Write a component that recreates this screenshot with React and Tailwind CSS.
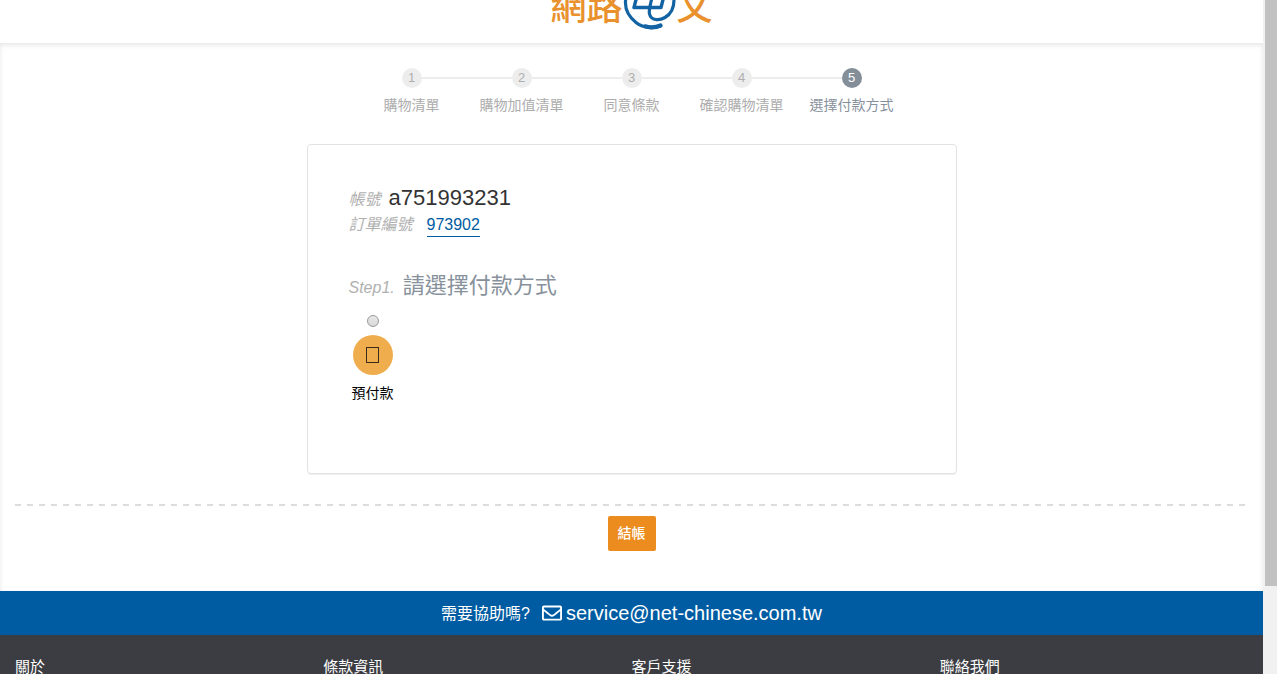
import { FaRegEnvelope } from 'react-icons/fa';

const steps = ['購物清單', '購物加值清單', '同意條款', '確認購物清單', '選擇付款方式'];
const footerColumns = ['關於', '條款資訊', '客戶支援', '聯絡我們'];

function Logo() {
  return (
    <a
      href="#home"
      aria-label="網路中文"
      className="flex items-end font-['Noto_Sans_CJK_TC',sans-serif] text-4xl leading-9 font-medium text-[#e8912d]"
    >
      <span>網路</span>
      <svg viewBox="0 0 54 54" className="-mb-2 h-[54px] w-[54px]" fill="none" stroke="#1263a3" strokeLinecap="round" strokeLinejoin="round">
        <path d="M37.500 49.800C30 53 20 52 13 46.500C5 40 2 32 2.500 25C4 11 14 2 27 2C41 2 51 11 51 24C51 32 48 38 42 41.500C36 45 28 44.500 26.500 38C26 36 26.500 32 27.500 28L32 8" strokeWidth="3.200" />
        <path d="M37.500 49.500C33 51.500 27 51.800 22 50.300" strokeWidth="4.200" />
        <path d="M15.500 14L11 31.500L38 31.500L42.500 14Z" strokeWidth="3.400" />
      </svg>
      <span>文</span>
    </a>
  );
}

function Steps() {
  return (
    <ol className="mx-auto flex w-full max-w-[550px] text-center text-sm leading-5">
      {steps.map((label, index) => {
        const active = index === steps.length - 1;
        return (
          <li key={label} className={active ? 'flex-1 text-[#87919c]' : 'flex-1 text-[#adadad]'}>
            <div className="flex items-center">
              <span className={index === 0 ? 'h-0.5 flex-1' : 'h-0.5 flex-1 bg-[#ededed]'} />
              <span
                className={
                  active
                    ? 'size-5 rounded-full bg-[#848e99] text-[13px] text-white'
                    : 'size-5 rounded-full bg-[#ededed] text-[13px]'
                }
              >
                {index + 1}
              </span>
              <span className={active ? 'h-0.5 flex-1' : 'h-0.5 flex-1 bg-[#ededed]'} />
            </div>
            <div className="mt-[7px] whitespace-nowrap">{label}</div>
          </li>
        );
      })}
    </ol>
  );
}

export default function App() {
  return (
    <div className="flex h-screen overflow-hidden bg-white font-['Liberation_Sans','Noto_Sans_CJK_TC',sans-serif]">
      <div className="flex min-w-0 flex-1 flex-col">
        <header className="flex h-[43px] shrink-0 items-end justify-center pb-[21px]">
          <Logo />
        </header>
        <main className="shrink-0 px-[15px] pt-[25px] pb-10 shadow-[inset_0_2px_5px_#e6e6e6]">
          <Steps />
          <section className="mx-auto mt-[29px] min-h-[330px] max-w-[650px] rounded border border-[#e2e2e2] px-[41px] pt-[39px] pb-16 shadow-[0_1px_1px_#f0f0f0]">
            <p className="flex items-baseline gap-2 leading-7">
              <em className="text-base leading-7 text-[#b0b0b0]">帳號</em>
              <span className="text-[22px] text-[#333333]">a751993231</span>
            </p>
            <p className="flex items-baseline gap-3.5 text-base leading-[22px]">
              <em className="text-[#b0b0b0]">訂單編號</em>
              <a href="#order" className="border-b border-[#005ca2] text-[#005ca2]">
                973902
              </a>
            </p>
            <h2 className="mt-[33px] flex items-baseline gap-2 text-[22px] leading-8 text-[#87919c]">
              <em className="text-base text-[#b0b0b0]">Step1.</em>
              請選擇付款方式
            </h2>
            <label className="mt-[13px] flex w-12 flex-col items-center text-sm leading-5 text-black">
              <input
                type="radio"
                name="payment"
                className="size-3 appearance-none rounded-full border border-[#999999] bg-linear-to-b from-[#e8e8e8] to-[#d8d8d8]"
              />
              <span className="mt-2 flex size-10 items-center justify-center rounded-full bg-[#f0ad4e]">
                <svg viewBox="0 0 13 16" className="h-4 w-[13px]" aria-hidden="true">
                  <rect x="0.5" y="0.5" width="12" height="15" fill="none" stroke="#3a2c18" />
                </svg>
              </span>
              <span className="mt-2">預付款</span>
            </label>
          </section>
          <div className="mt-[30px] h-0.5 bg-[repeating-linear-gradient(to_right,#dddddd_0_6px,transparent_6px_12px)]" />
          <button
            type="button"
            className="mx-auto mt-2.5 block rounded-xs bg-[#ec8b1e] px-2.5 py-[7px] text-sm leading-[21px] font-medium text-white"
          >
            結帳
          </button>
        </main>
        <div className="flex h-11 shrink-0 items-center justify-center gap-3 bg-[#005ca2] text-white">
          <span className="pt-0.5 text-base">需要協助嗎?</span>
          <a href="mailto:service@net-chinese.com.tw" className="flex items-center gap-1 text-xl">
            <FaRegEnvelope className="size-5" />
            service@net-chinese.com.tw
          </a>
        </div>
        <footer className="grid flex-1 grid-cols-4 bg-[#3b3d42] px-[15px] pt-5 text-[15px] leading-6 text-white">
          {footerColumns.map((title) => (
            <h3 key={title}>{title}</h3>
          ))}
        </footer>
      </div>
      <div className="w-3.5 shrink-0 bg-[#f1f1f1] pl-0.5" aria-hidden="true">
        <div className="h-[87%] bg-[#c1c1c1]" />
      </div>
    </div>
  );
}
